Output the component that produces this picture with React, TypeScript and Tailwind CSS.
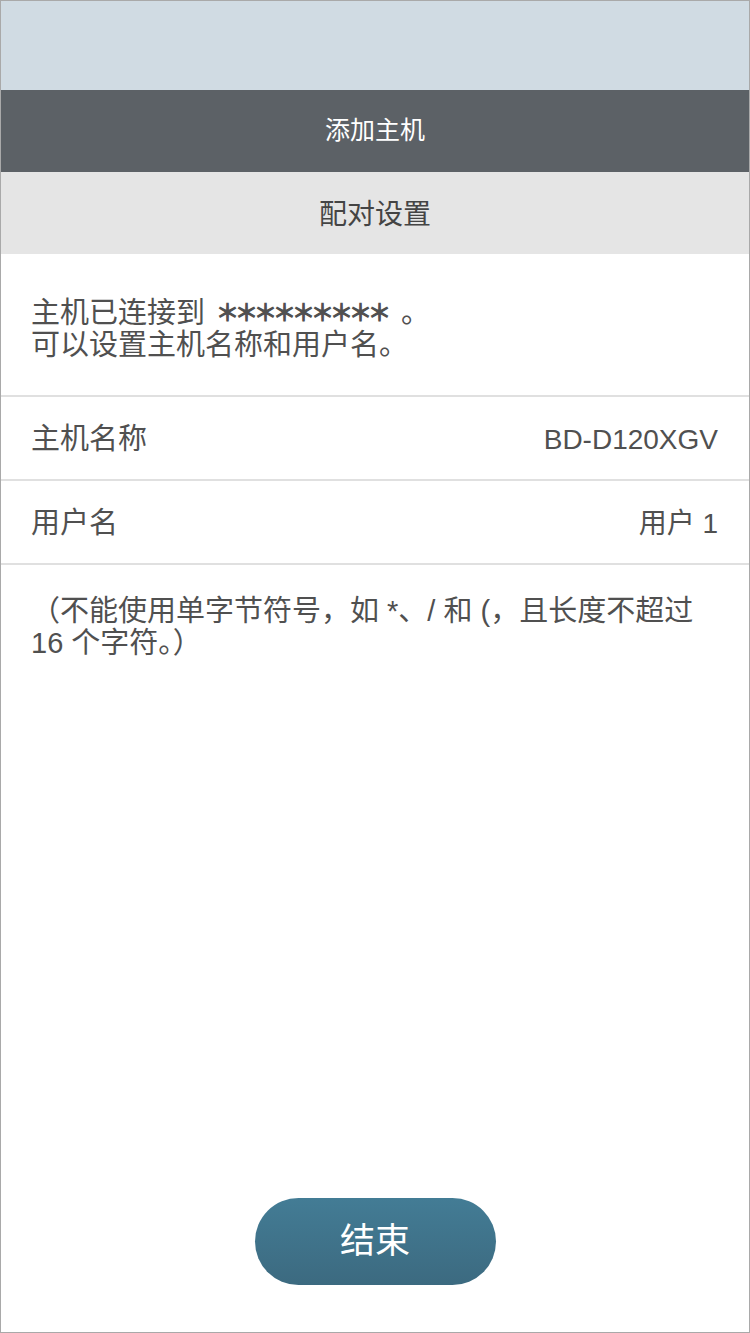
const FONT = { fontFamily: '"Liberation Sans", "Noto Sans CJK SC", sans-serif' };

function Row({ label, value }: { label: string; value: string }) {
  return (
    <div className="flex h-[84px] items-center justify-between border-b-2 border-[#e0e0e0] pl-[30px] pr-[31px] pt-[3px] text-[29px] text-[#505050]">
      <span>{label}</span>
      <span className="text-[28px]">{value}</span>
    </div>
  );
}

export default function App() {
  return (
    <div
      style={FONT}
      className="flex h-[1333px] w-[750px] flex-col overflow-hidden border border-[#a9a9a9] bg-white"
    >
      {/* Status bar area */}
      <div className="h-[89px] shrink-0 bg-[#d0dbe3]" />

      {/* Title bar */}
      <div className="flex h-[82px] shrink-0 items-center justify-center bg-[#5c6166] text-[25px] text-white">
        添加主机
      </div>

      {/* Section header */}
      <div className="flex h-[82px] shrink-0 items-center justify-center bg-[#e5e5e5] pt-[3px] text-[28px] text-[#444]">
        配对设置
      </div>

      {/* Intro */}
      <div className="flex h-[143px] shrink-0 flex-col justify-center border-b-2 border-[#e0e0e0] pl-[30px] pt-[8px] text-[29px] leading-[32px] text-[#505050]">
        <p>
          主机已连接到{" "}
          <span className="relative -top-[2px] pl-[3px] font-['Noto_Sans_CJK_SC'] text-[23px] tracking-[-4px] [-webkit-text-stroke:1.2px_#505050]">
            ＊＊＊＊＊＊＊＊＊
          </span>
          <span className="pl-[14px]">。</span>
        </p>
        <p>可以设置主机名称和用户名。</p>
      </div>

      <Row label="主机名称" value="BD-D120XGV" />
      <Row label="用户名" value="用户 1" />

      {/* Note */}
      <div className="pl-[30px] pr-[20px] pt-[30px] text-[29px] leading-[32px] text-[#505050]">
        <p>（不能使用单字节符号，如 *、/ 和 (，且长度不超过</p>
        <p>16 个字符。）</p>
      </div>

      <div className="flex-1" />

      {/* Finish button */}
      <div className="flex justify-center pb-[47px]">
        <button className="flex h-[87px] w-[241px] items-center justify-center rounded-full bg-gradient-to-b from-[#437c95] to-[#3c6a80] text-[35px] text-white">
          结束
        </button>
      </div>
    </div>
  );
}
